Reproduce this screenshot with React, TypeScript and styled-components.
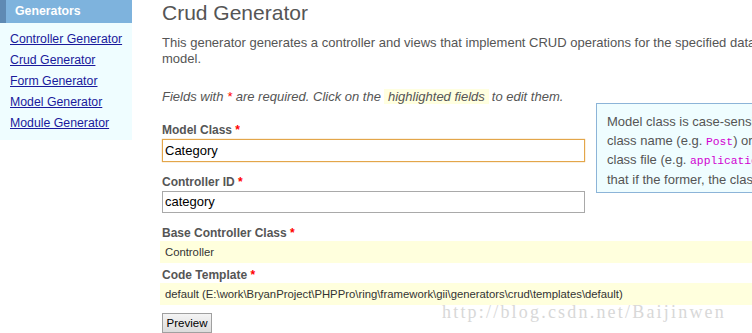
import React from 'react';
import styled, { createGlobalStyle } from 'styled-components';

const GlobalStyle = createGlobalStyle`
	html, body {
		margin: 0;
		padding: 0;
		background: #fff;
		overflow: hidden;
	}
	body {
		font-family: 'Liberation Sans', Arial, sans-serif;
		font-size: 13px;
		color: #555;
	}
`;

const Page = styled.div`
	display: flex;
	align-items: flex-start;
	width: 752px;
	height: 333px;
	overflow: hidden;
	position: relative;
`;

const Sidebar = styled.div`
	flex: 0 0 132px;
	background: #effdff;
	padding-bottom: 4px;
`;

const SideHeader = styled.div`
	height: 23px;
	line-height: 23px;
	background: #7eb3dd;
	border-left: 6px solid #5f8ab3;
	padding-left: 9px;
	color: #fff;
	font-weight: bold;
	font-size: 12.3px;
`;

const SideList = styled.ul`
	list-style: none;
	margin: 0;
	padding: 8px 0 0 10px;
`;

const SideItem = styled.li`
	height: 21px;
	line-height: 15px;
	a {
		color: #1a1a9c;
		text-decoration: underline;
		font-size: 12.3px;
	}
`;

const Main = styled.div`
	flex: 0 0 auto;
	width: 640px;
	margin-left: 30px;
	position: relative;
`;

const Title = styled.h1`
	margin: 0;
	font-size: 21px;
	font-weight: normal;
	color: #555;
	line-height: 25px;
`;

const Intro = styled.p`
	margin: 10px 0 0;
	line-height: 16px;
	white-space: nowrap;
`;

const Note = styled.p`
	margin: 20px 0 0;
	font-style: italic;
	line-height: 19px;
	white-space: nowrap;
`;

const Hint = styled.span`
	background: #ffffe0;
	padding: 0 4px;
	margin: 0 3px;
`;

const Req = styled.span`
	color: #f00;
`;

const Row = styled.div<{ $gap?: number }>`
	margin-top: ${(p) => p.$gap ?? 0}px;
`;

const Label = styled.div`
	font-weight: bold;
	font-size: 12px;
	line-height: 15px;
	height: 15px;
`;

const Input = styled.div<{ $focus?: boolean; $h?: number }>`
	box-sizing: border-box;
	width: 423px;
	height: ${(p) => p.$h ?? 22}px;
	margin-top: 1px;
	border: 1px solid ${(p) => (p.$focus ? '#e3a64a' : '#a9a9a9')};
	box-shadow: ${(p) => (p.$focus ? '0 0 1px #e3a64a' : 'none')};
	padding: 0 2px;
	line-height: ${(p) => (p.$h ?? 22) - 2}px;
	font-size: 13px;
	color: #000;
`;

const Sticky = styled.div`
	margin-left: -2px;
	width: 700px;
	height: 22px;
	line-height: 22px;
	background: #ffffdd;
	padding-left: 5px;
	white-space: nowrap;
	font-size: 11.3px;
	color: #333;
`;

const Button = styled.button`
	display: block;
	margin-top: 8px;
	width: 50px;
	height: 20px;
	padding: 0;
	border: 1px solid #a0a0a0;
	background: linear-gradient(#f4f4f4, #dcdcdc);
	font-family: 'Liberation Sans', Arial, sans-serif;
	font-size: 11.5px;
	color: #000;
`;

const Tip = styled.div`
	position: absolute;
	left: 434px;
	top: 103px;
	width: 300px;
	height: 90px;
	box-sizing: border-box;
	background: #effdff;
	border: 1px solid #8cb4d8;
	padding: 9px 0 0 10px;
	line-height: 18.7px;
	white-space: nowrap;
	color: #555;
`;

const Code = styled.code`
	font-family: 'Liberation Mono', 'Courier New', monospace;
	font-size: 11.3px;
	color: #d100d1;
`;

const Watermark = styled.div`
	position: absolute;
	left: 442px;
	top: 302px;
	font-family: 'Liberation Serif', 'Times New Roman', serif;
	font-size: 18px;
	color: #d8d8d8;
	letter-spacing: 2.2px;
	pointer-events: none;
`;

const generators = ['Controller Generator', 'Crud Generator', 'Form Generator', 'Model Generator', 'Module Generator'];

export default function App() {
	return (
		<>
			<GlobalStyle />
			<Page>
				<Sidebar>
					<SideHeader>Generators</SideHeader>
					<SideList>
						{generators.map((g) => (
							<SideItem key={g}>
								<a href='#'>{g}</a>
							</SideItem>
						))}
					</SideList>
				</Sidebar>
				<Main>
					<Title>Crud Generator</Title>
					<Intro>
						This generator generates a controller and views that implement CRUD operations for the specified data
						<br />
						model.
					</Intro>
					<Note>
						Fields with <Req>*</Req> are required. Click on the<Hint>highlighted fields</Hint>to edit them.
					</Note>
					<Row $gap={17}>
						<Label>
							Model Class <Req>*</Req>
						</Label>
						<Input $focus $h={23}>Category</Input>
					</Row>
					<Row $gap={13}>
						<Label>
							Controller ID <Req>*</Req>
						</Label>
						<Input>category</Input>
					</Row>
					<Row $gap={13}>
						<Label>
							Base Controller Class <Req>*</Req>
						</Label>
						<Sticky>Controller</Sticky>
					</Row>
					<Row $gap={5}>
						<Label>
							Code Template <Req>*</Req>
						</Label>
						<Sticky>default (E:\work\BryanProject\PHPPro\ring\framework\gii\generators\crud\templates\default)</Sticky>
					</Row>
					<Button>Preview</Button>
					<Tip>
						Model class is case-sensitive. It can be either a
						<br />
						class name (e.g. <Code>Post</Code>) or the path alias of the
						<br />
						class file (e.g. <Code>application.models.Post</Code>). Note
						<br />
						that if the former, the class must be auto-loadable.
					</Tip>
				</Main>
				<Watermark>http://blog.csdn.net/Baijinwen</Watermark>
			</Page>
		</>
	);
}
